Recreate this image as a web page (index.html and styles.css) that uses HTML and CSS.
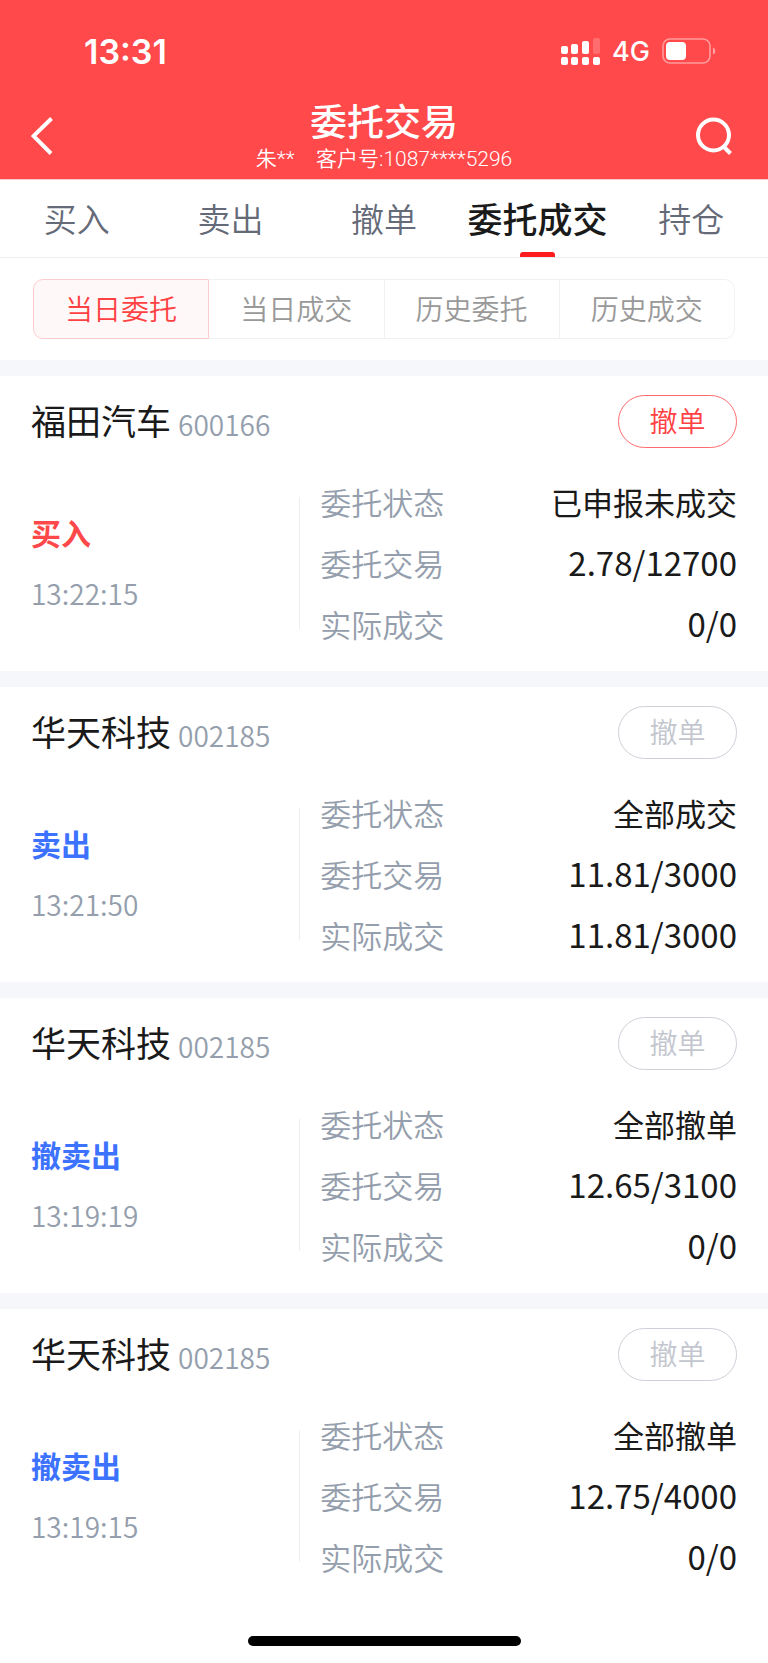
FILE: index.html
```
<!DOCTYPE html>
<html lang="zh-CN">
  <head>
    <meta charset="UTF-8" />
    <meta name="viewport" content="width=device-width, initial-scale=1.0" />

    <title>委托交易</title>
    <link rel="stylesheet" href="styles.css">
  </head>

  <body>
    <header class="header">
      <div class="status-bar">
        <span class="clock">13:31</span>
        <div class="status-icons">
          <svg width="39" height="28" viewBox="0 0 39 28" fill="#fff">
            <rect x="0" y="9" width="7" height="8" rx="2" />
            <rect x="10" y="7" width="7" height="10" rx="2" />
            <rect x="21" y="4" width="7" height="13" rx="2" />
            <rect x="32" y="1" width="7" height="16" rx="2" opacity="0.2" />
            <rect x="0" y="20" width="7" height="8" rx="2" />
            <rect x="10" y="20" width="7" height="8" rx="2" />
            <rect x="21" y="20" width="7" height="8" rx="2" />
            <rect x="32" y="20" width="7" height="8" rx="2" />
          </svg>
          <span class="network">4G</span>
          <svg width="54" height="26" viewBox="0 0 54 26" fill="none">
            <rect x="1" y="1" width="47" height="24" rx="7" stroke="#fff" stroke-width="1.6" opacity="0.45" />
            <rect x="4" y="4" width="20" height="18" rx="4" fill="#fff" />
            <path d="M51 9.5c3 1 3 6 0 7z" fill="#fff" opacity="0.5" />
          </svg>
        </div>
      </div>
      <div class="navbar">
        <button class="icon-btn" aria-label="返回">
          <svg width="22" height="38" viewBox="0 0 22 38" fill="none" stroke="#fff" stroke-width="4">
            <path d="M20.5 1.5L2.5 19L20 36.5" />
          </svg>
        </button>
        <div class="nav-title">
          <h1>委托交易</h1>
          <p>朱**&emsp;客户号:1087****5296</p>
        </div>
        <button class="icon-btn" aria-label="搜索">
          <svg width="38" height="40" viewBox="0 0 38 40" fill="none" stroke="#fff" stroke-width="4">
            <circle cx="18.500" cy="19" r="15.500" />
            <path d="M27.500 29.500L35.500 37.500" />
          </svg>
        </button>
      </div>
    </header>

    <nav class="tabs">
      <a href="#buy">买入</a>
      <a href="#sell">卖出</a>
      <a href="#cancel">撤单</a>
      <a href="#orders" class="active">委托成交</a>
      <a href="#position">持仓</a>
    </nav>

    <div class="segment">
      <button class="active">当日委托</button>
      <button>当日成交</button>
      <button>历史委托</button>
      <button>历史成交</button>
    </div>

    <main>
      <section class="order">
        <div class="order-head">
          <h2>福田汽车</h2>
          <span class="code">600166</span>
          <button class="cancel-btn">撤单</button>
        </div>
        <div class="order-body">
          <div class="order-side">
            <strong class="buy">买入</strong>
            <time>13:22:15</time>
          </div>
          <dl class="order-info">
            <div><dt>委托状态</dt><dd>已申报未成交</dd></div>
            <div><dt>委托交易</dt><dd class="num">2.78/12700</dd></div>
            <div><dt>实际成交</dt><dd class="num">0/0</dd></div>
          </dl>
        </div>
      </section>

      <section class="order">
        <div class="order-head">
          <h2>华天科技</h2>
          <span class="code">002185</span>
          <button class="cancel-btn" disabled>撤单</button>
        </div>
        <div class="order-body">
          <div class="order-side">
            <strong class="sell">卖出</strong>
            <time>13:21:50</time>
          </div>
          <dl class="order-info">
            <div><dt>委托状态</dt><dd>全部成交</dd></div>
            <div><dt>委托交易</dt><dd class="num">11.81/3000</dd></div>
            <div><dt>实际成交</dt><dd class="num">11.81/3000</dd></div>
          </dl>
        </div>
      </section>

      <section class="order">
        <div class="order-head">
          <h2>华天科技</h2>
          <span class="code">002185</span>
          <button class="cancel-btn" disabled>撤单</button>
        </div>
        <div class="order-body">
          <div class="order-side">
            <strong class="sell">撤卖出</strong>
            <time>13:19:19</time>
          </div>
          <dl class="order-info">
            <div><dt>委托状态</dt><dd>全部撤单</dd></div>
            <div><dt>委托交易</dt><dd class="num">12.65/3100</dd></div>
            <div><dt>实际成交</dt><dd class="num">0/0</dd></div>
          </dl>
        </div>
      </section>

      <section class="order">
        <div class="order-head">
          <h2>华天科技</h2>
          <span class="code">002185</span>
          <button class="cancel-btn" disabled>撤单</button>
        </div>
        <div class="order-body">
          <div class="order-side">
            <strong class="sell">撤卖出</strong>
            <time>13:19:15</time>
          </div>
          <dl class="order-info">
            <div><dt>委托状态</dt><dd>全部撤单</dd></div>
            <div><dt>委托交易</dt><dd class="num">12.75/4000</dd></div>
            <div><dt>实际成交</dt><dd class="num">0/0</dd></div>
          </dl>
        </div>
      </section>
    </main>

    <footer class="home-bar"><span></span></footer>
  </body>
</html>
```
FILE: styles.css
```
* {
  box-sizing: border-box;
  margin: 0;
  padding: 0;
}

body {
  background-color: #fff;
  color: #1a1a1a;
  font-family: "Noto Sans CJK SC", sans-serif;
}

button {
  background: none;
  border: none;
  font-family: inherit;
  cursor: pointer;
}

a {
  text-decoration: none;
}

/* header */
.header {
  background-color: #ff494b;
  color: #fff;
  border-bottom: 1px solid #ffc8c9;
}

.status-bar {
  display: flex;
  justify-content: space-between;
  align-items: center;
  height: 102px;
  padding: 0 52px 0 84px;
  font-family: Inter, sans-serif;
}

.clock {
  font-size: 34px;
  font-weight: 600;
}

.status-icons {
  display: flex;
  align-items: center;
  gap: 12px;
}

.network {
  font-size: 27px;
  font-weight: 500;
}

.navbar {
  display: flex;
  justify-content: space-between;
  align-items: flex-start;
  height: 77px;
  padding: 0 35px 0 31px;
}

.icon-btn {
  width: 48px;
  height: 67px;
  display: flex;
  align-items: center;
}

.icon-btn:last-child {
  width: 44px;
  justify-content: flex-end;
}

.nav-title {
  text-align: center;
}

.nav-title h1 {
  font-size: 37px;
  font-weight: 500;
  line-height: 36px;
}

.nav-title p {
  font-family: Roboto, "Noto Sans CJK SC", sans-serif;
  font-size: 21px;
  font-weight: 350;
  line-height: 42px;
}

/* tabs */
.tabs {
  display: flex;
  height: 78px;
  border-bottom: 1px solid #eceef0;
}

.tabs a {
  flex: 1;
  display: flex;
  justify-content: center;
  position: relative;
  color: #656a78;
  font-size: 33px;
  font-weight: 350;
  line-height: 76px;
  white-space: nowrap;
}

.tabs .active {
  color: #1a1a1a;
  font-size: 35px;
  font-weight: 500;
}

.tabs .active::after {
  content: "";
  position: absolute;
  bottom: 0;
  width: 35px;
  height: 5px;
  background-color: #ff1c1f;
  border-radius: 3px 3px 0 0;
}

/* segmented filter */
.segment {
  display: flex;
  padding: 21px 33px;
}

.segment button {
  flex: 1;
  height: 60px;
  padding-bottom: 3px;
  border: 1px solid #eff2f5;
  border-left: none;
  color: #999;
  font-size: 28px;
  font-weight: 350;
}

.segment button:last-child {
  border-radius: 0 10px 10px 0;
}

.segment .active {
  border: 1px solid #ffcccd;
  border-radius: 10px 0 0 10px;
  background-color: #fff8f8;
  color: #ff4143;
}

/* order list */
.order {
  padding: 19px 31px 17px;
  border-top: 16px solid #f6f7fa;
}

.order-head {
  display: flex;
  align-items: center;
  margin-bottom: 23px;
}

.order-head h2 {
  font-size: 35px;
  font-weight: 400;
  line-height: 50px;
  padding-bottom: 3px;
}

.code {
  margin-left: 7px;
  padding-top: 6px;
  color: #949eac;
  font-size: 28px;
  font-weight: 350;
  line-height: 47px;
}

.cancel-btn {
  width: 119px;
  height: 53px;
  margin-left: auto;
  padding-bottom: 3px;
  border: 1px solid #ff6b6d;
  border-radius: 27px;
  color: #ff4143;
  font-size: 28px;
  font-weight: 350;
}

.cancel-btn:disabled {
  border-color: #cdd0d8;
  color: #c3c6cf;
  cursor: default;
}

.order-body {
  display: flex;
  line-height: 61px;
}

.order-side {
  width: 38%;
  display: flex;
  flex-direction: column;
  justify-content: center;
}

.order-side strong {
  font-size: 30px;
}

.order-side time {
  color: #949eac;
  font-size: 28px;
  font-weight: 350;
}

.buy {
  color: #ff4849;
}

.sell {
  color: #3d72ff;
}

.order-info {
  flex: 1;
  padding-left: 21px;
  background: linear-gradient(#eceef0, #eceef0) left / 1px 132px no-repeat;
}

.order-info div {
  display: flex;
  justify-content: space-between;
  height: 61px;
}

.order-info dt {
  color: #949eac;
  font-size: 31px;
  font-weight: 350;
}

.order-info dd {
  font-size: 31px;
}

.order-info .num {
  font-size: 33px;
}

/* home indicator */
.home-bar {
  display: flex;
  justify-content: center;
  padding: 32px 0 17px;
}

.home-bar span {
  width: 273px;
  height: 10px;
  border-radius: 5px;
  background-color: #000;
}
```
